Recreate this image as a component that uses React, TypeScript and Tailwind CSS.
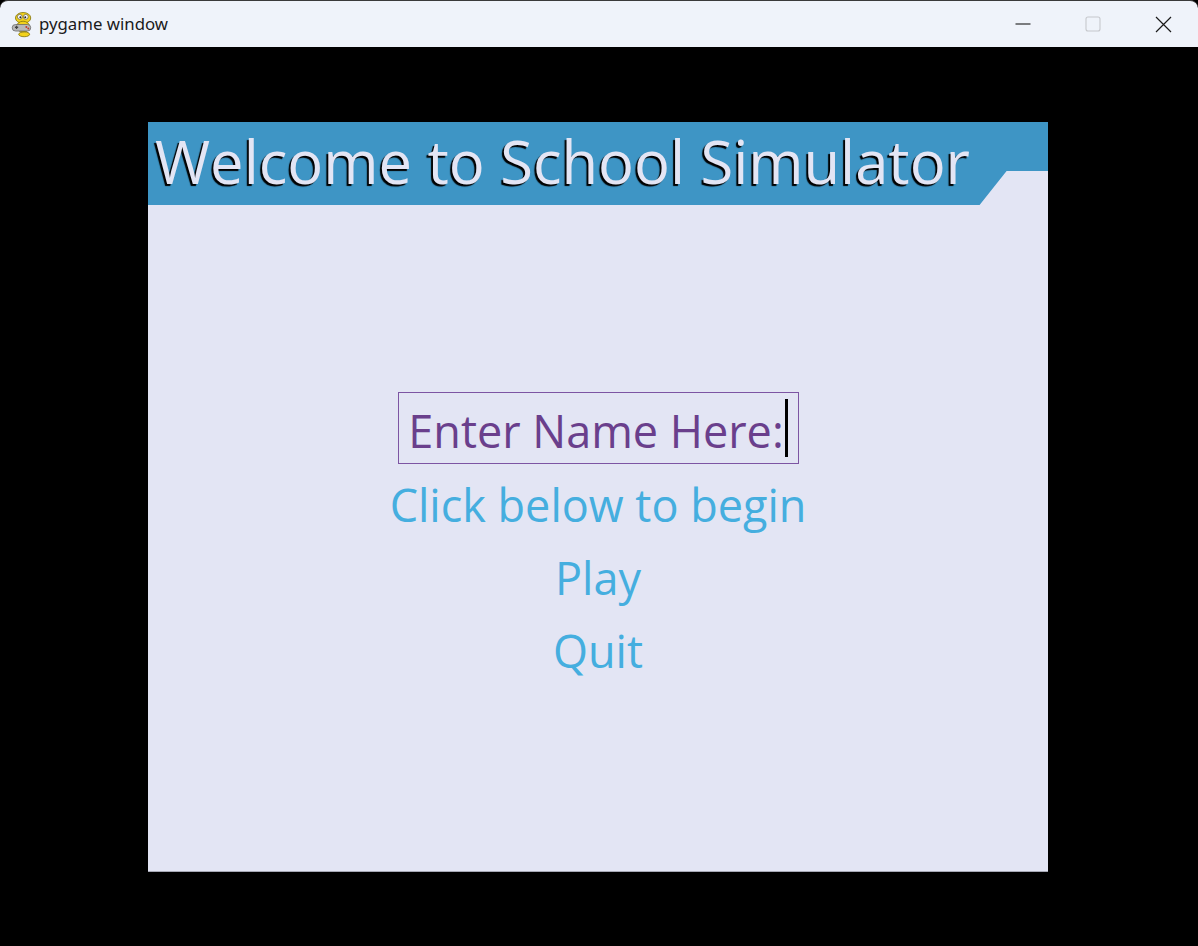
function PygameIcon() {
  return (
    <svg width="24" height="27" viewBox="0 0 22 24">
      <ellipse cx="12" cy="6" rx="7" ry="5" fill="#f2d21b" stroke="#8a7a10" strokeWidth="0.8" />
      <circle cx="9" cy="5" r="2.2" fill="#fff" stroke="#555" strokeWidth="0.6" />
      <circle cx="14.5" cy="5" r="2.2" fill="#fff" stroke="#555" strokeWidth="0.6" />
      <circle cx="9.5" cy="5.3" r="0.9" fill="#222" />
      <circle cx="14" cy="5.3" r="0.9" fill="#222" />
      <ellipse cx="12" cy="14" rx="6" ry="5" fill="#f2d21b" stroke="#8a7a10" strokeWidth="0.8" />
      <rect x="2" y="12" width="17" height="6" rx="3" fill="#b9b9b9" stroke="#666" strokeWidth="0.7" />
      <rect x="4.5" y="14" width="3" height="1.2" fill="#444" />
      <rect x="5.4" y="13.1" width="1.2" height="3" fill="#444" />
      <circle cx="15" cy="14.3" r="0.9" fill="#c0392b" />
      <circle cx="16.8" cy="15.6" r="0.9" fill="#c0392b" />
      <ellipse cx="13" cy="21" rx="5" ry="2.2" fill="#f2d21b" stroke="#8a7a10" strokeWidth="0.8" />
    </svg>
  )
}

export default function App() {
  const font = { fontFamily: '"Open Sans", "Noto Sans", sans-serif' }

  return (
    <div className="w-[1198px] h-[946px] bg-black flex flex-col overflow-hidden" style={font}>
      {/* window title bar */}
      <div className="h-[47px] bg-[#eff3fa] border-t border-[#3a3a3a] rounded-t-[8px] flex items-center shrink-0">
        <div className="pl-[10px] pr-[5px] flex items-center">
          <PygameIcon />
        </div>
        <span className="text-[16.8px] text-[#1a1a1a]" style={{ fontFamily: '"Noto Sans", "Open Sans", sans-serif' }}>
          pygame window
        </span>
        <div className="ml-auto flex items-center h-full">
          <div className="w-[70px] h-full flex items-center justify-center">
            <svg width="16" height="16" viewBox="0 0 16 16">
              <line x1="0.5" y1="8" x2="15.5" y2="8" stroke="#1a1a1a" strokeWidth="1.1" />
            </svg>
          </div>
          <div className="w-[70px] h-full flex items-center justify-center">
            <svg width="16" height="16" viewBox="0 0 16 16">
              <rect x="1" y="1" width="14" height="14" rx="2" fill="none" stroke="#c6c8cc" strokeWidth="1.1" />
            </svg>
          </div>
          <div className="w-[70px] h-full flex items-center justify-center">
            <svg width="17" height="17" viewBox="0 0 17 17">
              <path d="M1 1 L16 16 M16 1 L1 16" stroke="#1a1a1a" strokeWidth="1.2" />
            </svg>
          </div>
        </div>
      </div>

      {/* game surface */}
      <div className="flex-1 pl-[148px] pt-[75px]">
        <div className="w-[900px] h-[750px] bg-[#e3e5f4] border-b border-[#a6a8b5] flex flex-col">
          <div
            className="h-[83px] bg-[#3e95c5] flex items-start pl-[7px] shrink-0"
            style={{ clipPath: 'polygon(0 0, 100% 0, 100% 59%, 95.4% 59%, 92.4% 100%, 0 100%)' }}
          >
            <span
              className="text-[59.7px] leading-[78px] text-[#e3e5f4] whitespace-nowrap"
              style={{ textShadow: '-2px 2px 1px #000' }}
            >
              Welcome to School Simulator
            </span>
          </div>

          <div className="flex flex-col items-center pt-[187px]">
            <div className="w-[401px] h-[72px] border-[1.5px] border-[#7d55a3] flex items-center justify-center pt-[4px]">
              <span className="text-[45px] leading-[61px] text-[#6a3f8c] whitespace-nowrap">Enter Name Here:</span>
              <span className="w-[3px] h-[58px] bg-black ml-[1px] -mt-[4px]" />
            </div>
            <div className="flex flex-col items-center text-[45px] leading-[73px] text-[#45aedf] pt-[4px]">
              <span>Click below to begin</span>
              <span>Play</span>
              <span>Quit</span>
            </div>
          </div>
        </div>
      </div>
    </div>
  )
}
